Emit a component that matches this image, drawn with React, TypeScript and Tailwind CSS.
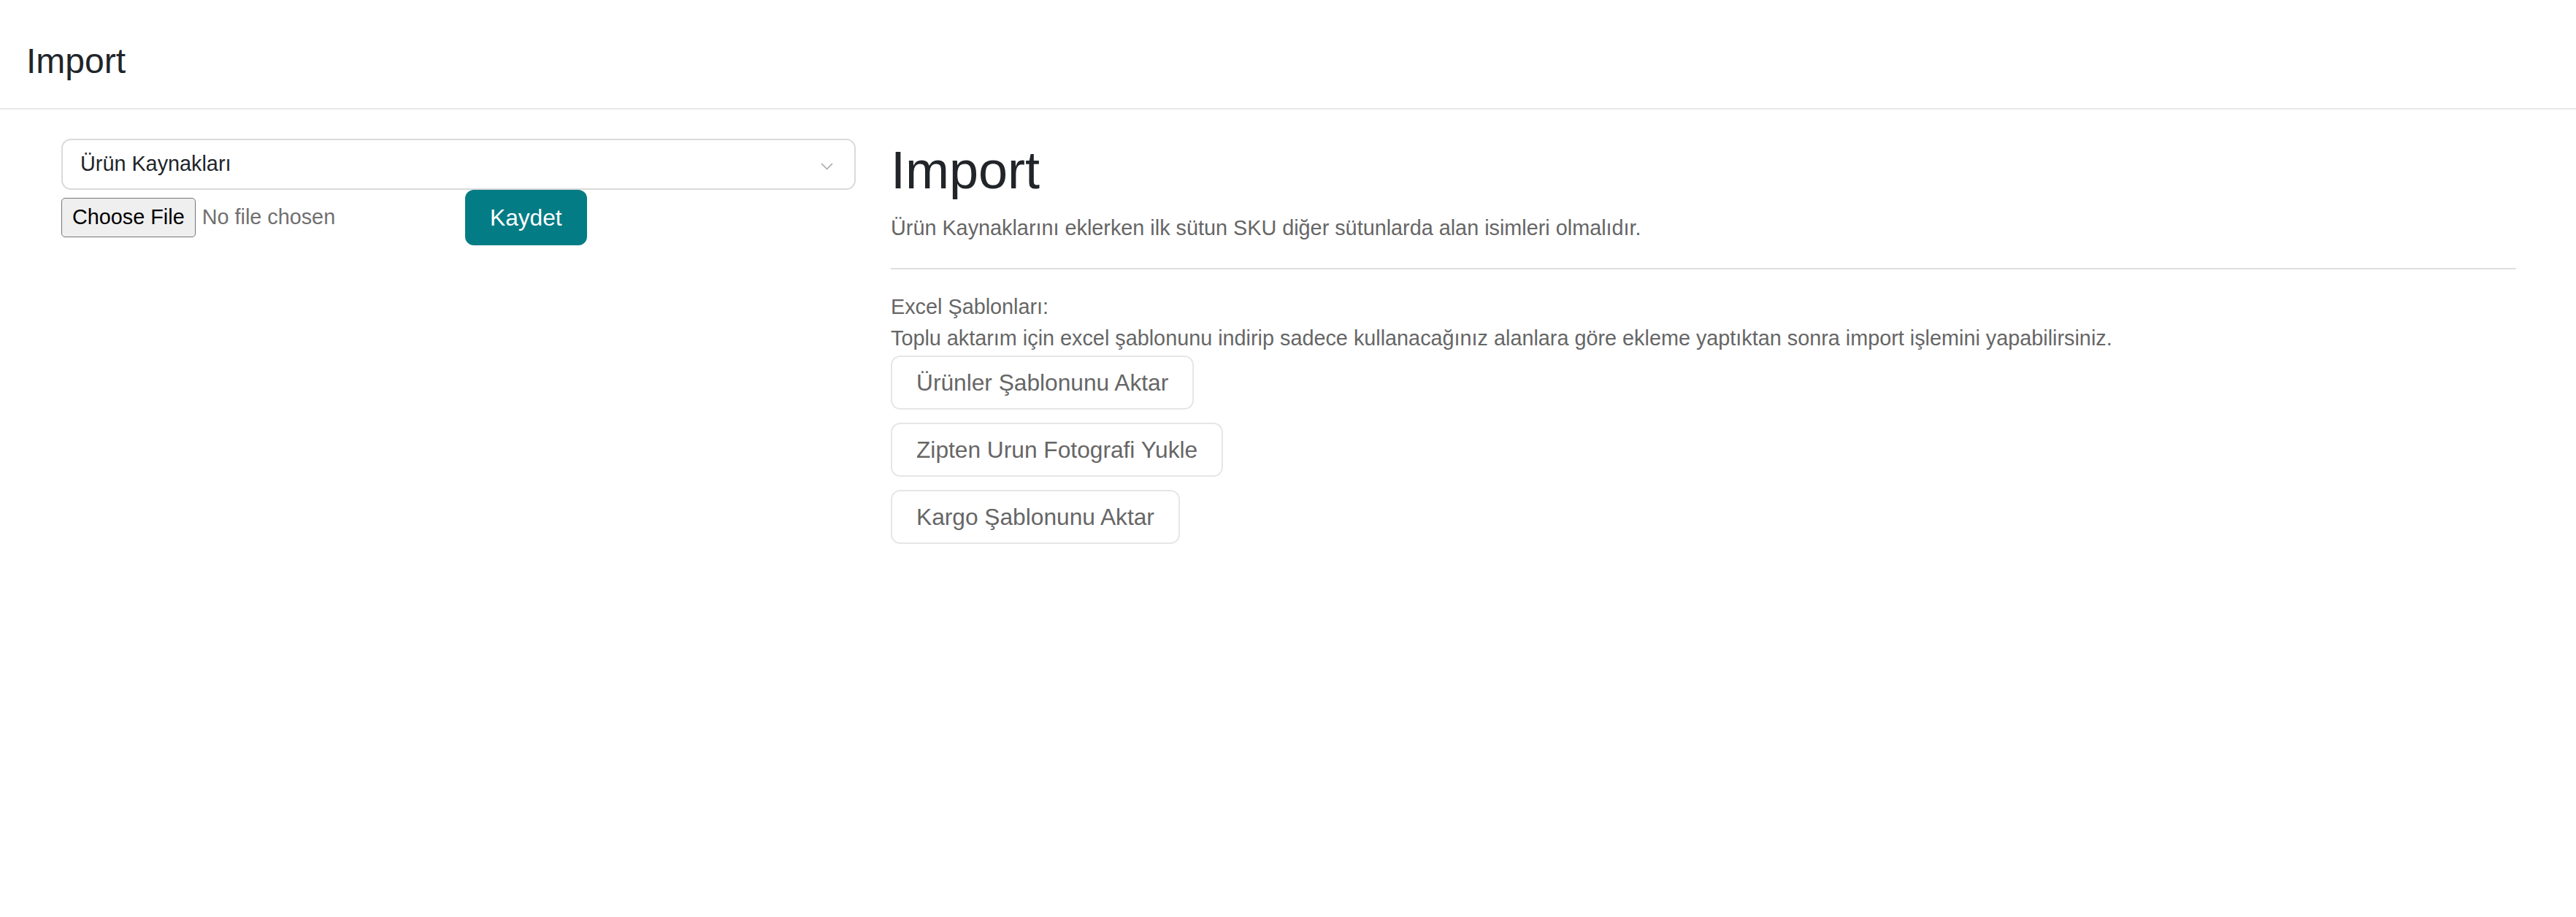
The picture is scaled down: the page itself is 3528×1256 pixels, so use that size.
import React from 'react';

const templateButtons = ['Ürünler Şablonunu Aktar', 'Zipten Urun Fotografi Yukle', 'Kargo Şablonunu Aktar'];

const App: React.FC = () => {
  return (
    <div className="min-h-screen w-full bg-white font-['Liberation_Sans',Arial,sans-serif] text-[#212529]">
      <header className="h-[150px] border-b-2 border-[#e8e8e8] pl-[36px] pt-[55px]">
        <h3 className="text-[48px] leading-[57.6px] font-normal">Import</h3>
      </header>

      <div className="flex gap-[48px] pl-[84px] pr-[82px] pt-[40px]">
        {/* left column: source select + upload */}
        <div className="w-[1088px] shrink-0">
          <div className="flex h-[70px] items-center justify-between rounded-[13px] border-2 border-[#dadada] pl-[24px] pr-[29px]">
            <span className="text-[28.8px] leading-[43.2px]">Ürün Kaynakları</span>
            <svg width="17" height="10" viewBox="0 0 17 10" className="mt-[5px]">
              <polyline points="1,1 8.5,8.5 16,1" fill="none" stroke="#a3a3a3" strokeWidth="1.5" />
            </svg>
          </div>
          <div className="flex h-[76px] items-center">
            <div className="flex w-[553px] items-center">
              <button
                type="button"
                className="flex h-[54px] items-center rounded-[5px] border-[1.5px] border-[#767676] bg-[#efefef] px-[14px] text-[28.8px] text-black"
              >
                Choose File
              </button>
              <span className="ml-[9px] text-[28.8px] text-[#707070]">No file chosen</span>
            </div>
            <button
              type="button"
              className="rounded-[12px] bg-[#047c85] px-[34px] py-[14px] text-[31.7px] leading-[48px] text-white"
            >
              Kaydet
            </button>
          </div>
        </div>

        {/* right column: info + templates */}
        <div className="flex-1">
          <h1 className="mb-[14.4px] text-[72px] leading-[86.4px] font-normal">Import</h1>
          <p className="text-[28.8px] leading-[43.2px] text-[#666666]">
            Ürün Kaynaklarını eklerken ilk sütun SKU diğer sütunlarda alan isimleri olmalıdır.
          </p>
          <div className="mt-[33px] h-[2px] bg-[#dedede]" />
          <div className="mt-[30px] text-[28.8px] leading-[43.2px] text-[#666666]">
            <p>Excel Şablonları:</p>
            <p>
              Toplu aktarım için excel şablonunu indirip sadece kullanacağınız alanlara göre ekleme yaptıktan sonra import
              işlemini yapabilirsiniz.
            </p>
          </div>
          <div className="mt-[2px] flex flex-col items-start gap-[18px]">
            {templateButtons.map((label) => (
              <button
                key={label}
                type="button"
                className="rounded-[13px] border-2 border-[#e6e6e6] bg-white px-[33px] py-[11px] text-[31.7px] leading-[48px] text-[#666666]"
              >
                {label}
              </button>
            ))}
          </div>
        </div>
      </div>
    </div>
  );
};

export default App;
